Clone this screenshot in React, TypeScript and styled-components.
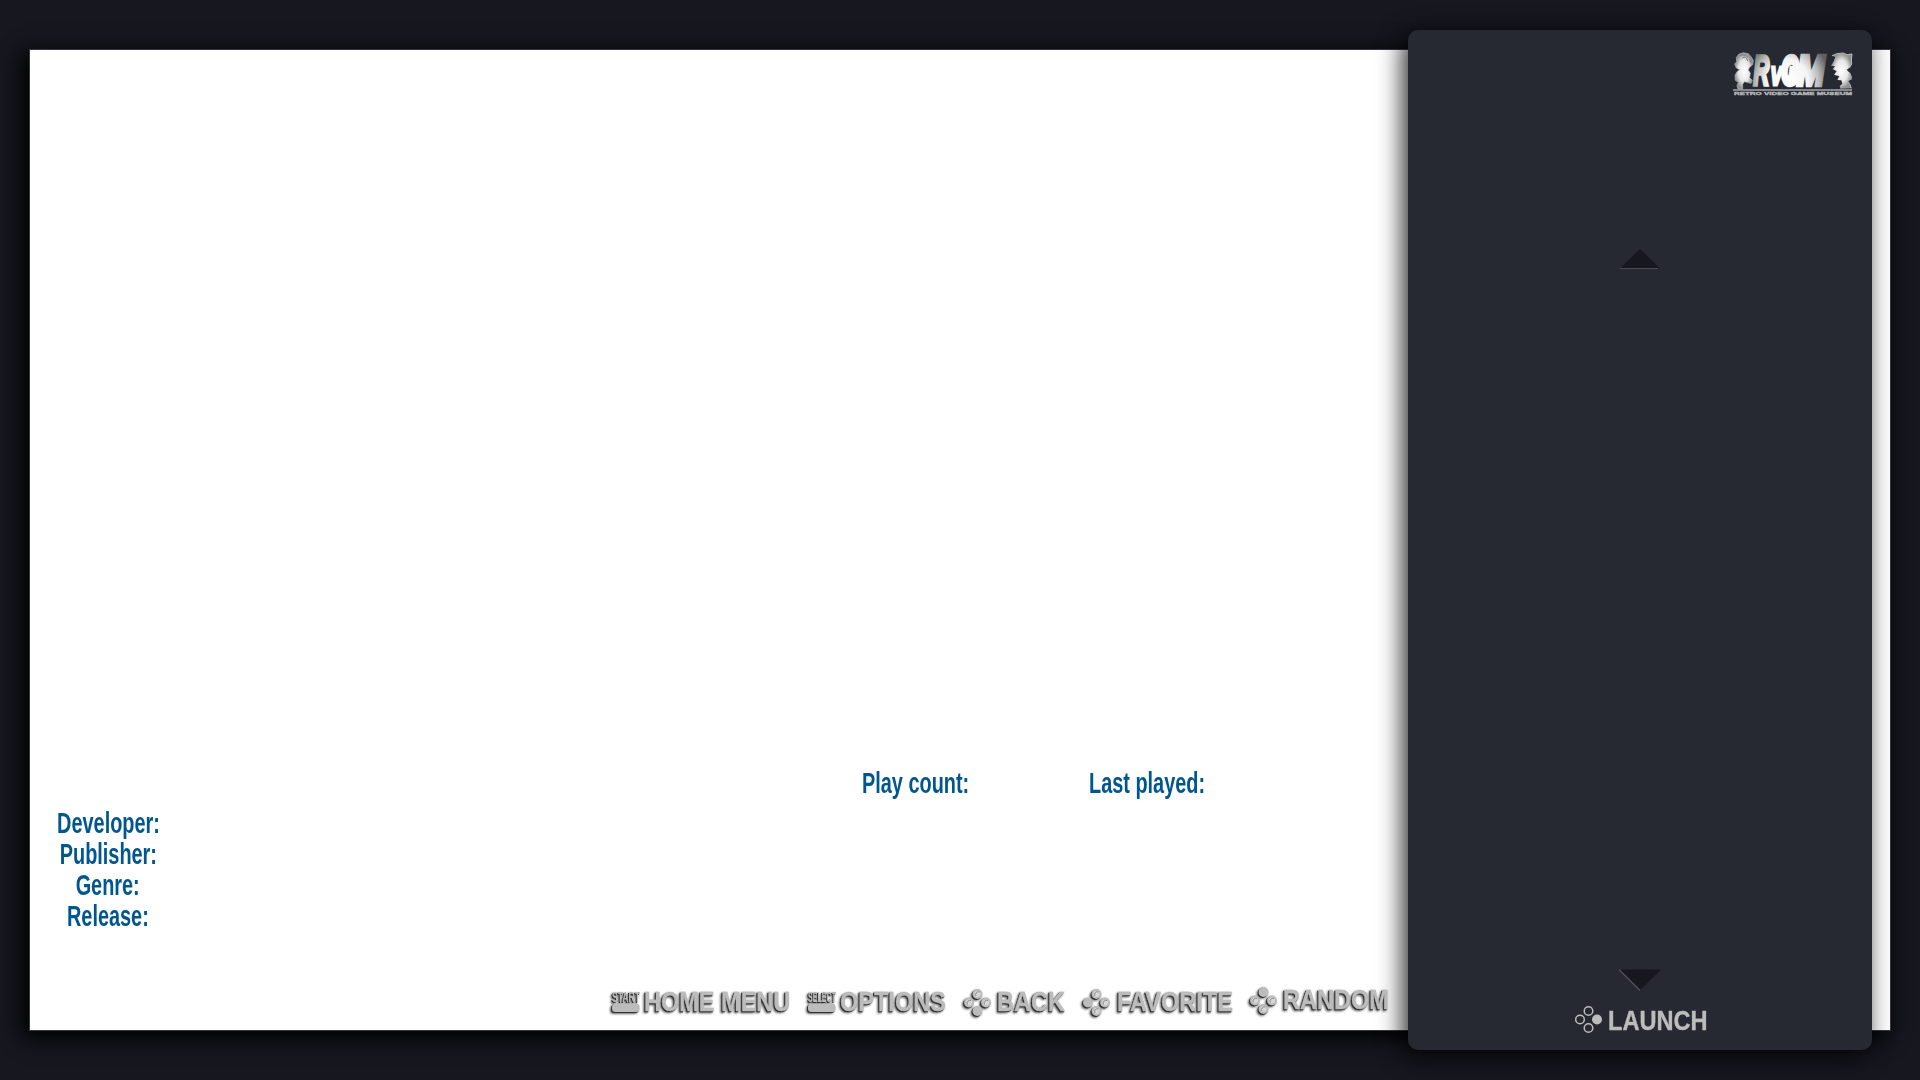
import React from "react";
import styled, { createGlobalStyle } from "styled-components";

const Global = createGlobalStyle`
  html, body { margin: 0; padding: 0; background: #16171f; overflow: hidden; }
  * { box-sizing: border-box; }
`;

const Stage = styled.main`
  width: 1920px;
  height: 1080px;
  display: grid;
  grid-template: 1080px / 1920px;
  background: #16171f;
  overflow: hidden;
  font-family: "Liberation Sans", Arial, sans-serif;
  font-weight: 700;
`;

const Sheet = styled.section`
  grid-area: 1 / 1;
  margin: 49px 29px;
  border: 1px solid #39363d;
  background: #fff;
  box-shadow: -5px 5px 20px 2px #000;
  display: flex;
  flex-direction: column;
`;

const Side = styled.aside`
  grid-area: 1 / 1;
  justify-self: end;
  width: 464px;
  height: 1020px;
  margin: 30px 48px 30px 0;
  border-radius: 10px;
  background: #262931;
  box-shadow: -5px 5px 24px rgba(0, 0, 0, 0.85);
  display: flex;
  flex-direction: column;
  align-items: center;
`;

const Stats = styled.div`
  display: grid;
  grid-template-columns: 227px auto;
  margin: 717px 0 0 832px;
`;

const Meta = styled.div`
  display: flex;
  flex-direction: column;
  align-items: center;
  width: 156px;
  margin-top: 9px;
`;

const Label = styled.span<{ $left?: boolean }>`
  display: block;
  height: 31px;
  line-height: 31px;
  font-size: 29.6px;
  white-space: nowrap;
  color: #00568f;
  transform: scaleX(0.672);
  transform-origin: ${(p) => (p.$left ? "left" : "center")};
`;

const Hints = styled.nav`
  display: grid;
  grid-template-columns: 196px 157px 119px 167px 150px;
  margin: 55px 0 0 581px;
`;

const Hint = styled.div<{ $gap?: number; $raise?: boolean }>`
  display: flex;
  align-items: center;
  gap: ${(p) => p.$gap ?? 3}px;
  height: 32px;
  margin-top: ${(p) => (p.$raise ? -2 : 0)}px;
  filter: drop-shadow(-1px 1px 0.5px #303030) drop-shadow(-1px 1px 1px #606060);
`;

const Caption = styled.span<{ $size?: number; $ratio?: number }>`
  display: block;
  font-size: ${(p) => p.$size ?? 28}px;
  line-height: 32px;
  white-space: nowrap;
  color: #bcbcbc;
  -webkit-text-stroke: 0.4px #bcbcbc;
  transform: scaleX(${(p) => p.$ratio ?? 0.84});
  transform-origin: left;
`;

const Icon = styled.svg`
  display: block;
  flex: none;
  overflow: visible;
`;

const LogoRow = styled.header`
  align-self: flex-end;
  margin: 21px 18px 0 0;
  height: 46px;
`;

const ListArea = styled.div`
  display: flex;
  flex-direction: column;
  justify-content: space-between;
  height: 743px;
  margin-top: 151px;
`;

const Launch = styled.div`
  display: flex;
  align-items: flex-start;
  gap: 6px;
  align-self: flex-start;
  margin: 14px 0 0 167px;
  height: 32px;
  padding-top: 1px;

  & > span { margin-top: -1px; }
`;

type Direction = "top" | "right" | "bottom" | "left";

function Pad({ active, flat }: { active: Direction; flat?: boolean }) {
  const spots: [Direction, number, number][] = [
    ["top", 13.5, 5],
    ["right", 22, 13.5],
    ["bottom", 13.5, 22],
    ["left", 5, 13.5],
  ];
  return (
    <Icon width="27" height="27" viewBox="0 0 27 27">
      {spots.map(([name, x, y]) =>
        name === active ? (
          <circle key={name} cx={x} cy={y} r="5" fill="#bcbcbc" />
        ) : (
          <circle key={name} cx={x} cy={y} r={flat ? 4.3 : 4} fill={flat ? "none" : "#d8d8d8"} stroke="#bcbcbc" strokeWidth={flat ? 1.5 : 2} />
        )
      )}
      {!flat &&
        spots
          .filter(([name]) => name !== active)
          .map(([name, x, y]) => (
            <path key={name} d={`M${x - 1.5} ${y + 2} A2.8 2.8 0 0 1 ${x + 2} ${y - 2}`} fill="none" stroke="#8a8a8a" strokeWidth="1" />
          ))}
    </Icon>
  );
}

function PillKey({ text }: { text: string }) {
  return (
    <Icon width="30" height="24" viewBox="0 0 30 24">
      <text x="1" y="11.5" fontSize="14" textLength="28" lengthAdjust="spacingAndGlyphs" fill="#bcbcbc">{text}</text>
      <rect x="1" y="13.5" width="27.5" height="8.5" rx="3.5" fill="#bcbcbc" />
    </Icon>
  );
}

function Logo() {
  return (
    <svg width="122" height="46" viewBox="96 93 366 138">
      <defs>
        <radialGradient id="metal" gradientUnits="userSpaceOnUse" cx="262" cy="182" r="128">
          <stop offset="0" stopColor="#fff" />
          <stop offset=".5" stopColor="#f4f4f4" />
          <stop offset=".75" stopColor="#b8b8b8" />
          <stop offset="1" stopColor="#606060" />
        </radialGradient>
        <radialGradient id="figure">
          <stop offset="0" stopColor="#fff" />
          <stop offset=".6" stopColor="#e6e6e6" />
          <stop offset="1" stopColor="#8d8f91" />
        </radialGradient>
      </defs>
      <path d="M109 113 L116 103 L130 98 L145 101 L153 110 L160 121 L158 134 L149 142 L145 150 L151 159 L149 173 L157 181 L153 190 L141 187 L133 185 L128 193 L128 207 L114 207 L111 197 L115 187 L106 181 L105 166 L111 155 L119 149 L109 144 L104 132 L110 125Z" fill="url(#figure)" stroke="#b5b8b8" strokeWidth="2" />
      <path d="M119 108 Q132 99 145 113 M127 114 Q138 105 143 123 M149 117 L154 129" fill="none" stroke="#77797b" strokeWidth="3" />
      <g fontFamily="Liberation Sans" fontWeight="700" fontStyle="italic" fill="url(#metal)" stroke="url(#metal)" strokeLinejoin="miter">
        <text x="160" y="196" fontSize="130" textLength="48" lengthAdjust="spacingAndGlyphs" strokeWidth="11">R</text>
        <text x="212" y="196" fontSize="98" textLength="34" lengthAdjust="spacingAndGlyphs" strokeWidth="9">v</text>
        <text x="245" y="193" fontSize="118" textLength="50" lengthAdjust="spacingAndGlyphs" strokeWidth="20">G</text>
        <text x="291" y="196" fontSize="130" textLength="82" lengthAdjust="spacingAndGlyphs" strokeWidth="13">M</text>
      </g>
      <path d="M396 107 L411 101 L429 99 L441 104 L456 102 L454 120 L455 132 L449 143 L440 149 L449 158 L454 171 L453 179 L444 184 L450 194 L454 205 L421 206 L419 198 L427 191 L424 181 L412 180 L418 169 L402 164 L410 154 L398 147 L405 139 L393 137 L400 126 L406 111Z" fill="url(#figure)" />
      <path d="M396 107 L411 101 L429 99 L441 104 L456 102 L454 120 L455 132 L449 143 M449 158 L454 171 L453 179 M444 184 L450 194 L454 205" fill="none" stroke="#b7baba" strokeWidth="3" />
      <path d="M99 210H456" stroke="#a4a7a8" strokeWidth="5" />
      <text x="102" y="225" fontFamily="Liberation Sans" fontWeight="700" fontSize="13" textLength="354" lengthAdjust="spacingAndGlyphs" fill="#b4b6b6" stroke="#b4b6b6" strokeWidth="1">RETRO VIDEO GAME MUSEUM</text>
    </svg>
  );
}

export default function App() {
  return (
    <Stage>
      <Global />
      <Sheet>
        <Stats>
          <Label $left>Play count:</Label>
          <Label $left>Last played:</Label>
        </Stats>
        <Meta>
          <Label>Developer:</Label>
          <Label>Publisher:</Label>
          <Label>Genre:</Label>
          <Label>Release:</Label>
        </Meta>
        <Hints>
          <Hint><PillKey text="START" /><Caption>HOME MENU</Caption></Hint>
          <Hint><PillKey text="SELECT" /><Caption>OPTIONS</Caption></Hint>
          <Hint $gap={6}><Pad active="bottom" /><Caption>BACK</Caption></Hint>
          <Hint $gap={7}><Pad active="left" /><Caption>FAVORITE</Caption></Hint>
          <Hint $gap={6} $raise><Pad active="top" /><Caption>RANDOM</Caption></Hint>
        </Hints>
      </Sheet>
      <Side>
        <LogoRow><Logo /></LogoRow>
        <ListArea>
          <Icon width="42" height="22" viewBox="0 0 42 22">
            <path d="M21 1 L41 20.5 H1Z" fill="#16171f" />
            <path d="M1 20.5H39" stroke="#4b4c52" />
          </Icon>
          <Icon width="42" height="22" viewBox="0 0 42 22">
            <path d="M0 .5H42L21 21.5Z" fill="#16171f" />
            <path d="M0 .5L21 21.5" stroke="#4f5058" strokeWidth="1.4" />
          </Icon>
        </ListArea>
        <Launch>
          <Pad active="right" flat />
          <Caption $size={27.6} $ratio={0.855}>LAUNCH</Caption>
        </Launch>
      </Side>
    </Stage>
  );
}
